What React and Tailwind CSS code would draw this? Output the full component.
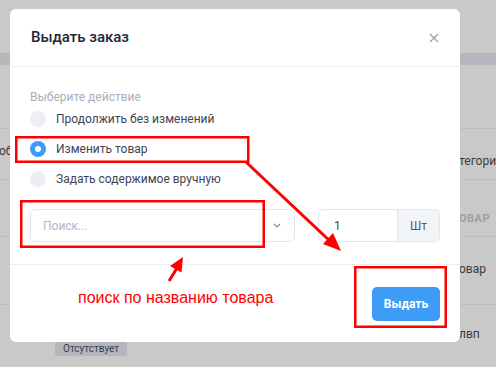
const options = [
  { id: "keep", label: "Продолжить без изменений" },
  { id: "change", label: "Изменить товар" },
  { id: "manual", label: "Задать содержимое вручную" },
];

function Radio({ checked, label }) {
  return (
    <label className="flex items-center h-[16px] gap-[10px] text-[12px] text-[#404453]">
      {checked ? (
        <span className="w-[16px] h-[16px] rounded-full bg-[#3d9cf6] flex items-center justify-center">
          <span className="w-[6px] h-[6px] rounded-full bg-white" />
        </span>
      ) : (
        <span className="w-[16px] h-[16px] rounded-full bg-[#eceef4]" />
      )}
      {label}
    </label>
  );
}

function Annotations() {
  return (
    <svg
      className="absolute inset-0 pointer-events-none"
      width="496"
      height="367"
      viewBox="0 0 496 367"
    >
      <g fill="none" stroke="#ff0000" strokeWidth="2.5">
        <rect x="16.25" y="137.25" width="232" height="24.5" />
        <rect x="21.25" y="201.25" width="242.5" height="45.5" />
        <rect x="355.25" y="267.25" width="90.5" height="59.5" />
        <line x1="246" y1="162" x2="332" y2="243" strokeWidth="3" />
        <line x1="169" y1="281" x2="177" y2="268" strokeWidth="3" />
      </g>
      <g fill="#ff0000">
        <polygon points="341,251 323,244 333,233" />
        <polygon points="183,257 181.5,272.5 170,266" />
      </g>
    </svg>
  );
}

export default function App() {
  const selected = "change";

  return (
    <div className="relative w-[496px] h-[367px] overflow-hidden bg-[#c9c9c7] font-['Roboto',sans-serif]">
      {/* page behind the overlay */}
      <div className="flex flex-col pt-[53px] text-[12px] text-[#3a3b40]">
        <div className="h-[12px] bg-[#b4b7bc]" />
        <div className="h-[64px] border-b border-[#bdbdbc]" />
        <div className="h-[51px] border-b border-[#bdbdbc] flex justify-between">
          <span className="mt-[13px] -ml-[1px]">об</span>
          <span className="mt-[23px] w-[37px] whitespace-nowrap">тегори</span>
        </div>
        <div className="h-[57px] border-b border-[#bdbdbc] flex justify-end">
          <span className="mt-[31px] w-[37px] text-[11px] font-bold tracking-[0.5px] text-[#9c9ea5]">
            ОВАР
          </span>
        </div>
        <div className="h-[68px] border-b border-[#bdbdbc] flex justify-end">
          <span className="mt-[23px] w-[37px]">овар</span>
        </div>
        <div className="flex justify-between">
          <span className="mt-[36px] ml-[55px] h-[15px] px-[8px] rounded-[3px] bg-[#b4b5bd] text-[10px] leading-[15px] text-[#3d3e4b]">
            Отсутствует
          </span>
          <span className="mt-[20px] w-[37px]">лвп</span>
        </div>
      </div>

      {/* modal */}
      <div className="absolute left-[10px] top-[9px] w-[450px] h-[333px] bg-white rounded-[6px] flex flex-col">
        <div className="h-[58px] shrink-0 flex items-center justify-between pl-[21px] pr-[21px] border-b border-[#eceef3]">
          <h2 className="text-[15px] font-medium text-[#232634]">Выдать заказ</h2>
          <svg width="10" height="10" viewBox="0 0 10 10">
            <path d="M1 1L9 9M9 1L1 9" stroke="#9ca0ab" strokeWidth="1.3" />
          </svg>
        </div>

        <div className="px-[20px] pt-[22px] pb-[22px] border-b border-[#eceef3]">
          <div className="text-[12px] leading-[16px] text-[#a9adbd]">Выберите действие</div>
          <div className="mt-[6px] flex flex-col gap-[14px]">
            {options.map((option) => (
              <Radio
                key={option.id}
                checked={option.id == selected}
                label={option.label}
              />
            ))}
          </div>
          <div className="mt-[22px] flex items-center">
            <div className="w-[265px] h-[33px] border border-[#e4e6ee] rounded-[5px] flex items-center justify-between pl-[12px] pr-[13px]">
              <span className="text-[12px] text-[#b3b6c6]">Поиск...</span>
              <svg width="8" height="5" viewBox="0 0 8 5">
                <path d="M1 1L4 4L7 1" fill="none" stroke="#7d82aa" strokeWidth="1.1" />
              </svg>
            </div>
            <div className="ml-auto w-[122px] h-[33px] border border-[#e4e6ee] rounded-[5px] flex">
              <span className="flex-1 flex items-center pl-[15px] text-[12px] text-[#404453]">1</span>
              <span className="w-[42px] flex items-center justify-center bg-[#f3f4f8] border-l border-[#e4e6ee] rounded-r-[5px] text-[12px] text-[#555a6b]">
                Шт
              </span>
            </div>
          </div>
        </div>

        <div className="flex-1 flex items-center justify-end px-[20px]">
          <button className="w-[68px] h-[34px] rounded-[5px] bg-[#3d9cf6] text-white text-[12px] font-bold">
            Выдать
          </button>
        </div>
      </div>

      <Annotations />
      <div className="absolute left-[78px] top-[288px] font-['Liberation_Sans',sans-serif] text-[16px] leading-[20px] text-[#ff0000] whitespace-nowrap">
        поиск по названию товара
      </div>
    </div>
  );
}
